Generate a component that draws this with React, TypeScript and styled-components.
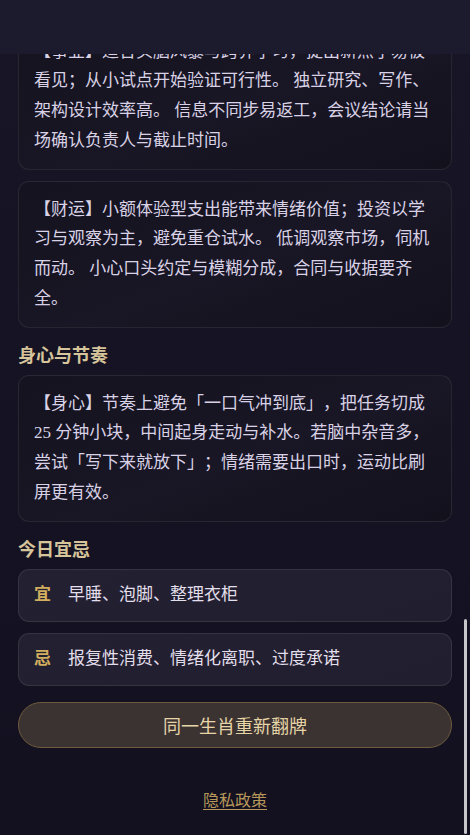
import React, { useLayoutEffect, useEffect } from "react"
import styled, { createGlobalStyle } from "styled-components"

const GlobalStyle = createGlobalStyle`
	html, body {
		margin: 0;
		padding: 0;
	}
	html {
		background: #151322;
	}
	body {
		font-family: "Liberation Serif", "Noto Sans CJK SC", serif;
		background: linear-gradient(180deg, #1d1a2e 0%, #191628 55%, #131120 100%);
		color: #d9d2e6;
		text-spacing-trim: space-all;
	}
	::-webkit-scrollbar {
		display: none;
	}
`

const TopBar = styled.header`
	position: fixed;
	top: 0;
	left: 0;
	right: 0;
	height: 54px;
	background: #1c1a2d;
	z-index: 10;
`

// thin overlay scroll indicator, as the mobile browser draws it
const ScrollThumb = styled.div`
	position: fixed;
	right: 3px;
	bottom: 1px;
	width: 3px;
	height: 215px;
	border-radius: 2px;
	background: #c8c8cc;
	z-index: 11;
`

const Page = styled.main`
	padding: 54px 18px 0;
`

const Hero = styled.section`
	display: grid;
	justify-items: center;
	gap: 10px;
	padding: 40px 0 28px;
	text-align: center;
`

const HeroTitle = styled.h1`
	margin: 0;
	font-size: 26px;
	font-weight: 700;
	color: #e2cf9f;
	letter-spacing: 2px;
`

const HeroSub = styled.p`
	margin: 0;
	font-size: 15px;
	color: #9d95b2;
`

const ZodiacGrid = styled.div`
	display: grid;
	grid-template-columns: repeat(4, 1fr);
	gap: 10px;
`

const ZodiacTile = styled.div<{ $active?: boolean }>`
	display: grid;
	place-items: center;
	height: 84px;
	border-radius: 12px;
	border: 1px solid ${(p) => (p.$active ? "#8a7246" : "rgba(255,255,255,0.08)")};
	background: ${(p) => (p.$active ? "#3a3130" : "#1d1b2b")};
	color: ${(p) => (p.$active ? "#e6d5a7" : "#c9c1d8")};
	font-size: 24px;
`

const Section = styled.section`
	display: grid;
	gap: 11px;
	margin-top: 16px;
`

const SectionTitle = styled.h2`
	margin: 0 0 -5px;
	font-size: 18px;
	line-height: 25px;
	font-weight: 700;
	color: #d6c49a;
`

const Card = styled.div`
	padding: 13px 15px;
	border: 1px solid rgba(255, 255, 255, 0.075);
	border-radius: 11px;
	background: linear-gradient(160deg, #15131f 0%, #191625 55%, #13111c 100%);
	font-size: 17px;
	line-height: 29.75px;
	color: #d9d2e6;
`

const Reveal = styled(Card)`
	display: grid;
	justify-items: center;
	gap: 8px;
	padding: 30px 15px;
	text-align: center;
`

const RevealSign = styled.div`
	font-size: 64px;
	line-height: 1.2;
	color: #e2cf9f;
`

const ScoreList = styled.div`
	display: grid;
	grid-template-columns: repeat(2, 1fr);
	gap: 6px 20px;
	width: 100%;
	margin-top: 10px;
`

const Score = styled.div`
	display: flex;
	justify-content: space-between;
	font-size: 16px;
	color: #c9c1d8;

	& b {
		color: #d2ad5f;
		font-weight: 400;
	}
`

const LuckGrid = styled.div`
	display: grid;
	grid-template-columns: repeat(2, 1fr);
	gap: 11px;
`

const LuckItem = styled.div`
	display: grid;
	gap: 4px;
	padding: 14px 15px;
	border: 1px solid rgba(255, 255, 255, 0.08);
	border-radius: 11px;
	background: #211f2f;
	font-size: 16px;
	color: #e2deeb;

	& span {
		font-size: 14px;
		color: #9d95b2;
	}
`

const Advice = styled.div`
	display: flex;
	align-items: center;
	gap: 17px;
	padding: 13.5px 15px;
	border: 1px solid rgba(255, 255, 255, 0.085);
	border-radius: 11px;
	background: linear-gradient(160deg, #232131 0%, #211f2f 100%);
	font-size: 17px;
	line-height: 24px;
	color: #e2deeb;
`

const AdviceLabel = styled.span`
	color: #d2ad5f;
	font-weight: 700;
`

const RedrawButton = styled.button`
	display: block;
	width: 100%;
	height: 46px;
	margin-top: 16px;
	border: 1px solid #6f5b3d;
	border-radius: 999px;
	background: #3b3232;
	font-family: "Liberation Serif", "Noto Sans CJK SC", serif;
	font-size: 18px;
	color: #e6d5a7;
	cursor: pointer;
`

const Footer = styled.footer`
	padding: 41px 0 22px;
	text-align: center;
`

const PrivacyLink = styled.a`
	font-size: 16px;
	line-height: 24px;
	color: #b8985a;
	text-decoration: underline;
	text-underline-offset: 3px;
`

const signs = ["鼠", "牛", "虎", "兔", "龙", "蛇", "马", "羊", "猴", "鸡", "狗", "猪"]

export default function App() {
	useLayoutEffect(() => {
		window.scrollTo(0, document.documentElement.scrollHeight)
	}, [])
	useEffect(() => {
		window.scrollTo(0, document.documentElement.scrollHeight)
	}, [])

	return (
		<>
			<GlobalStyle />
			<TopBar />
			<ScrollThumb />
			<Page>
				<Hero>
					<HeroTitle>生肖今日翻牌</HeroTitle>
					<HeroSub>选择你的生肖，翻开今天的运势牌</HeroSub>
				</Hero>
				<ZodiacGrid>
					{signs.map((s) => (
						<ZodiacTile key={s} $active={s === "龙"}>
							{s}
						</ZodiacTile>
					))}
				</ZodiacGrid>

				<Section>
					<SectionTitle>今日牌面</SectionTitle>
					<Reveal>
						<RevealSign>龙</RevealSign>
						<div>关键词：破局 · 沉淀 · 自洽</div>
						<ScoreList>
							<Score>综合 <b>★★★★☆</b></Score>
							<Score>爱情 <b>★★★☆☆</b></Score>
							<Score>事业 <b>★★★★☆</b></Score>
							<Score>财运 <b>★★★☆☆</b></Score>
						</ScoreList>
					</Reveal>
				</Section>

				<Section>
					<SectionTitle>今日概览</SectionTitle>
					<Card>
						【综合】今天适合把零散的想法收拢成一份清单，先做最小的一步。上午思路清晰，下午容易被琐事打断，重要的事情尽量提前处理。
					</Card>
				</Section>

				<Section>
					<SectionTitle>幸运元素</SectionTitle>
					<LuckGrid>
						<LuckItem><span>幸运色</span>墨绿、米白</LuckItem>
						<LuckItem><span>幸运数字</span>3、8</LuckItem>
						<LuckItem><span>幸运方位</span>东南</LuckItem>
						<LuckItem><span>贵人生肖</span>鸡、猴</LuckItem>
					</LuckGrid>
				</Section>

				<Section>
					<SectionTitle>感情与关系</SectionTitle>
					<Card>
						【爱情】单身者在兴趣圈子里更容易遇到聊得来的人；有伴者适合一起安排一次短途散步。 说话前先听完对方，误会会少很多。
					</Card>
					<Card>
						【人际】朋友的一句提醒值得放在心上，遇到分歧时先确认事实，再谈感受。 今天不宜替别人做决定。
					</Card>
				</Section>

				<Section>
					<SectionTitle>事业与财运</SectionTitle>
					<Card>
						【学业】适合整理错题与笔记，复盘比刷新题更有收获。 遇到卡住的地方，换个角度或请教同伴会更快。
					</Card>
					<Card>
						【事业】适合头脑风暴与跨界学习，提出新点子易被看见；从小试点开始验证可行性。 独立研究、写作、架构设计效率高。 信息不同步易返工，会议结论请当场确认负责人与截止时间。
					</Card>
					<Card>
						【财运】小额体验型支出能带来情绪价值；投资以学习与观察为主，避免重仓试水。 低调观察市场，伺机而动。 小心口头约定与模糊分成，合同与收据要齐全。
					</Card>
				</Section>

				<Section>
					<SectionTitle>身心与节奏</SectionTitle>
					<Card>
						【身心】节奏上避免「一口气冲到底」，把任务切成 25 分钟小块，中间起身走动与补水。若脑中杂音多，尝试「写下来就放下」；情绪需要出口时，运动比刷屏更有效。
					</Card>
				</Section>

				<Section>
					<SectionTitle>今日宜忌</SectionTitle>
					<Advice>
						<AdviceLabel>宜</AdviceLabel>早睡、泡脚、整理衣柜
					</Advice>
					<Advice>
						<AdviceLabel>忌</AdviceLabel>报复性消费、情绪化离职、过度承诺
					</Advice>
				</Section>

				<RedrawButton>同一生肖重新翻牌</RedrawButton>

				<Footer>
					<PrivacyLink href="#privacy">隐私政策</PrivacyLink>
				</Footer>
			</Page>
		</>
	)
}
